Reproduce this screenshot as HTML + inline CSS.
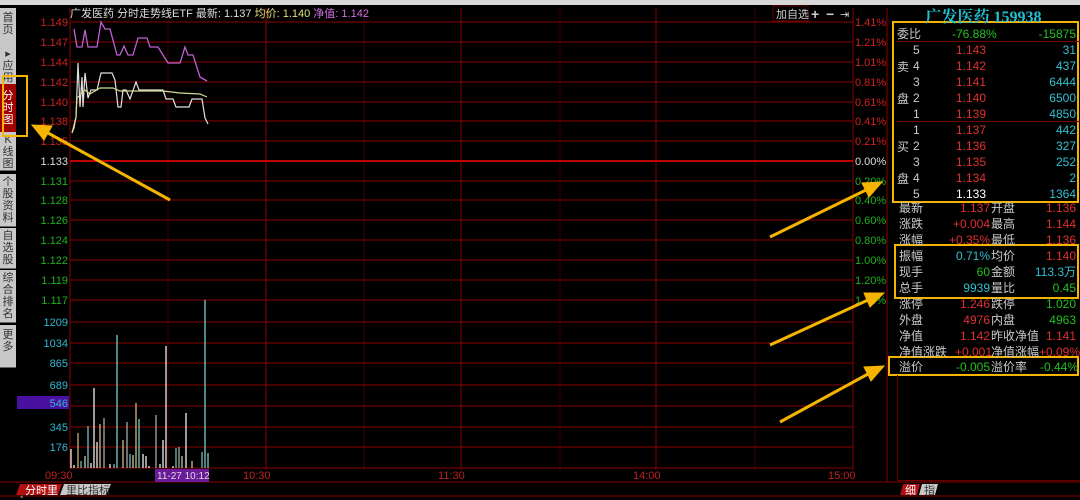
<!DOCTYPE html>
<html><head><meta charset="utf-8"><style>
body{margin:0;width:1080px;height:500px;background:#000;overflow:hidden;position:relative;font-family:"Liberation Sans","Noto Sans CJK SC",sans-serif;}
.tab{position:absolute;left:0;width:16px;background:#c8c8c8;color:#333;font-size:11px;line-height:12px;text-align:center;border-bottom:1px solid #666;}
#rp{position:absolute;left:887px;top:0;width:193px;height:500px;}
.r{position:absolute;left:10px;width:183px;height:16px;font-size:12px;line-height:16px;}
.r span{position:absolute;}
</style></head><body>
<div style="position:absolute;left:0;top:0;width:1080px;height:5px;background:#d8d8d8"></div>
<div class="tab" style="top:8px;height:34px;padding-top:4px">首<br>页</div>
<div class="tab" style="top:46px;height:36px;padding-top:2px">▸<br>应<br>用</div>
<div class="tab" style="top:84px;height:44px;padding-top:6px;background:#a00000;color:#fff">分<br>时<br>图</div>
<div class="tab" style="top:132px;height:36px;padding-top:2px">K<br>线<br>图</div>
<div class="tab" style="top:174px;height:50px;padding-top:2px">个<br>股<br>资<br>料</div>
<div class="tab" style="top:228px;height:38px;padding-top:2px">自<br>选<br>股</div>
<div class="tab" style="top:270px;height:50px;padding-top:2px">综<br>合<br>排<br>名</div>
<div class="tab" style="top:325px;height:38px;padding-top:4px">更<br>多</div>
<svg width="1080" height="500" style="position:absolute;left:0;top:0" font-family="Liberation Sans,Noto Sans CJK SC,sans-serif">
<g stroke="#8a0000" stroke-width="1">
<line x1="70" y1="8" x2="70" y2="470"/>
<line x1="168" y1="8" x2="168" y2="470" stroke="#400"/><line x1="266" y1="8" x2="266" y2="470"/><line x1="364" y1="8" x2="364" y2="470" stroke="#400"/><line x1="461" y1="8" x2="461" y2="470"/><line x1="560" y1="8" x2="560" y2="470" stroke="#400"/><line x1="656" y1="8" x2="656" y2="470"/><line x1="755" y1="8" x2="755" y2="470" stroke="#400"/><line x1="853" y1="8" x2="853" y2="470"/>
<line x1="70" y1="22" x2="853" y2="22"/><line x1="70" y1="42" x2="853" y2="42"/><line x1="70" y1="62" x2="853" y2="62"/><line x1="70" y1="82" x2="853" y2="82"/><line x1="70" y1="102" x2="853" y2="102"/><line x1="70" y1="121" x2="853" y2="121"/><line x1="70" y1="141" x2="853" y2="141"/>
<line x1="70" y1="161" x2="853" y2="161" stroke="#c00000" stroke-width="2"/>
<line x1="70" y1="181" x2="853" y2="181"/><line x1="70" y1="200" x2="853" y2="200"/><line x1="70" y1="220" x2="853" y2="220"/><line x1="70" y1="240" x2="853" y2="240"/><line x1="70" y1="260" x2="853" y2="260"/><line x1="70" y1="280" x2="853" y2="280"/><line x1="70" y1="300" x2="853" y2="300"/>
<line x1="70" y1="322" x2="853" y2="322"/><line x1="70" y1="343" x2="853" y2="343"/><line x1="70" y1="363" x2="853" y2="363"/><line x1="70" y1="385" x2="853" y2="385"/><line x1="70" y1="406" x2="853" y2="406"/><line x1="70" y1="427" x2="853" y2="427"/><line x1="70" y1="447" x2="853" y2="447"/><line x1="70" y1="468" x2="853" y2="468"/>
<line x1="0" y1="482" x2="1080" y2="482"/><line x1="0" y1="496" x2="1080" y2="496"/>
<line x1="887" y1="8" x2="887" y2="482"/>
</g>
<text x="70" y="17" font-size="11" fill="#ddd">广发医药 分时走势线ETF 最新: 1.137 <tspan fill="#e0e080">均价: 1.140</tspan> <tspan fill="#d070e0">净值: 1.142</tspan></text>
<g fill="#ccc" font-size="11"><rect x="773" y="6" width="35" height="15" fill="none" stroke="#600"/><text x="776" y="18">加自选</text><text x="811" y="19" font-size="14" font-weight="bold">+</text><text x="826" y="19" font-size="14" font-weight="bold">−</text><text x="840" y="18">⇥</text></g>
<g font-size="11" text-anchor="end">
<g fill="#d02020"><text x="68" y="26">1.149</text><text x="68" y="46">1.147</text><text x="68" y="66">1.144</text><text x="68" y="86">1.142</text><text x="68" y="106">1.140</text><text x="68" y="125">1.138</text><text x="68" y="145">1.135</text></g>
<text x="68" y="165" fill="#ddd">1.133</text>
<g fill="#20b020"><text x="68" y="185">1.131</text><text x="68" y="204">1.128</text><text x="68" y="224">1.126</text><text x="68" y="244">1.124</text><text x="68" y="264">1.122</text><text x="68" y="284">1.119</text><text x="68" y="304">1.117</text></g>
<rect x="17" y="396" width="52" height="13" fill="#4a10a0"/>
<g fill="#30b8d0"><text x="68" y="326">1209</text><text x="68" y="347">1034</text><text x="68" y="367">865</text><text x="68" y="389">689</text><text x="68" y="407">546</text><text x="68" y="431">345</text><text x="68" y="451">176</text></g>
</g>
<g font-size="11">
<g fill="#d02020"><text x="855" y="26">1.41%</text><text x="855" y="46">1.21%</text><text x="855" y="66">1.01%</text><text x="855" y="86">0.81%</text><text x="855" y="106">0.61%</text><text x="855" y="125">0.41%</text><text x="855" y="145">0.21%</text></g>
<text x="855" y="165" fill="#ddd">0.00%</text>
<g fill="#20b020"><text x="855" y="185">0.20%</text><text x="855" y="204">0.40%</text><text x="855" y="224">0.60%</text><text x="855" y="244">0.80%</text><text x="855" y="264">1.00%</text><text x="855" y="284">1.20%</text><text x="855" y="304">1.40%</text></g>
<g fill="#c02020"><text x="45" y="479">09:30</text><text x="243" y="479">10:30</text><text x="438" y="479">11:30</text><text x="633" y="479">14:00</text><text x="828" y="479">15:00</text></g>
<rect x="155" y="469" width="54" height="13" fill="#6a1a9a"/><text x="157" y="479" fill="#ddd" font-size="10">11-27 10:12</text>
</g>
<path d="M20 484 H62 L58 495 H16 Z" fill="#b01010"/><text x="25" y="494" font-size="11" fill="#fff">分时里</text>
<path d="M64 484 H111 L106 495 H60 Z" fill="#c8c8c8"/><text x="66" y="494" font-size="11" fill="#333">里比指标</text>
<polyline fill="none" stroke="#c060d0" stroke-width="1.3" points="74,29 77,47 82,47 85,30 88,47 97,47 101,22 105,29 110,29 117,55 120,55 124,46 128,55 133,55 138,38 147,38 150,47 158,47 163,55 168,63 180,63 185,47 188,55 193,55 200,77 207,81"/>
<polyline fill="none" stroke="#e0e0e0" stroke-width="1.2" points="72,133 74,128 76,117 78,63 80,107 82,77 83,107 85,73 88,98 91,90 97,90 101,73 107,73 112,73 115,80 118,107 121,107 123,90 126,90 130,99 136,82 139,90 163,90 166,99 173,99 176,107 189,107 192,99 202,99 205,118 208,124"/>
<polyline fill="none" stroke="#d8d890" stroke-width="1.2" points="72,133 76,117 77,98 80,95 85,90 90,94 100,88 113,88 120,91 163,91 180,93 200,94 207,97"/>
<g stroke-width="1.3">
<line x1="71" y1="468" x2="71" y2="449" stroke="#eee"/><line x1="74" y1="468" x2="74" y2="465" stroke="#eee"/><line x1="78" y1="468" x2="78" y2="433" stroke="#c8b070"/><line x1="81" y1="468" x2="81" y2="461" stroke="#6bb"/><line x1="85" y1="468" x2="85" y2="456" stroke="#bca"/><line x1="88" y1="468" x2="88" y2="426" stroke="#7bb"/><line x1="91" y1="468" x2="91" y2="463" stroke="#eee"/><line x1="94" y1="468" x2="94" y2="388" stroke="#eee"/><line x1="97" y1="468" x2="97" y2="442" stroke="#eee"/><line x1="100" y1="468" x2="100" y2="424" stroke="#cb8"/><line x1="104" y1="468" x2="104" y2="418" stroke="#aaa"/><line x1="110" y1="468" x2="110" y2="464" stroke="#eee"/><line x1="114" y1="468" x2="114" y2="464" stroke="#7bb"/><line x1="117" y1="468" x2="117" y2="335" stroke="#7cc"/><line x1="123" y1="468" x2="123" y2="440" stroke="#cb8"/><line x1="127" y1="468" x2="127" y2="422" stroke="#aaa"/><line x1="130" y1="468" x2="130" y2="454" stroke="#7bb"/><line x1="133" y1="468" x2="133" y2="455" stroke="#bca"/><line x1="136" y1="468" x2="136" y2="403" stroke="#cb8"/><line x1="139" y1="468" x2="139" y2="419" stroke="#7cc"/><line x1="143" y1="468" x2="143" y2="454" stroke="#eee"/><line x1="146" y1="468" x2="146" y2="456" stroke="#eee"/><line x1="149" y1="468" x2="149" y2="466" stroke="#eee"/><line x1="156" y1="468" x2="156" y2="415" stroke="#aaa"/><line x1="160" y1="468" x2="160" y2="464" stroke="#eee"/><line x1="163" y1="468" x2="163" y2="440" stroke="#eee"/><line x1="166" y1="468" x2="166" y2="346" stroke="#eee"/><line x1="173" y1="468" x2="173" y2="466" stroke="#eee"/><line x1="176" y1="468" x2="176" y2="448" stroke="#7bb"/><line x1="179" y1="468" x2="179" y2="447" stroke="#aaa"/><line x1="182" y1="468" x2="182" y2="456" stroke="#bca"/><line x1="186" y1="468" x2="186" y2="413" stroke="#eee"/><line x1="192" y1="468" x2="192" y2="461" stroke="#cb8"/><line x1="202" y1="468" x2="202" y2="452" stroke="#7bb"/><line x1="205" y1="468" x2="205" y2="300" stroke="#7cc"/><line x1="208" y1="468" x2="208" y2="453" stroke="#7cc"/>
</g>
<g font-size="10" fill="#666"><text x="20" y="500">▪</text></g>
<!-- orange boxes -->
<g fill="none" stroke="#f5b400" stroke-width="2">
<rect x="3" y="76" width="24" height="60"/>
<rect x="893" y="22" width="185" height="180"/>
<rect x="895" y="245" width="183" height="53"/>
<rect x="889" y="357" width="189" height="18"/>
</g>
<g fill="#f5b400" stroke="#f5b400">
<line x1="170" y1="200" x2="48" y2="133" stroke-width="3"/><polygon points="32,125 52,126 44,140"/>
<line x1="770" y1="237" x2="866" y2="190" stroke-width="3"/><polygon points="882,182 862,183 869,197"/>
<line x1="770" y1="345" x2="868" y2="300" stroke-width="3"/><polygon points="884,293 864,293 870,307"/>
<line x1="780" y1="422" x2="868" y2="374" stroke-width="3"/><polygon points="884,366 864,367 871,381"/>
</g>
<path d="M903 484 H920 L917 495 H900 Z" fill="#b01010"/><text x="905" y="494" font-size="11" fill="#fff">细</text>
<path d="M922 484 H938 L935 495 H919 Z" fill="#c8c8c8"/><text x="924" y="494" font-size="11" fill="#333">指</text>
</svg>
<div id="rp">
<div style="position:absolute;left:0;top:4px;width:193px;text-align:center;color:#20c0d0;font-size:16px;font-weight:bold;font-family:'Liberation Serif','Noto Serif CJK SC',serif">广发医药 159938</div>
<div class="r" style="top:26px;color:#ccc"><span style="left:0">委比</span><span style="left:55px;color:#20c020">-76.88%</span><span style="right:4px;color:#20c020">-15875</span></div>
<div style="position:absolute;left:10px;top:59px;color:#ccc;font-size:12px;line-height:16px">卖<br><br>盘</div>
<div style="position:absolute;left:10px;top:139px;color:#ccc;font-size:12px;line-height:16px">买<br><br>盘</div>
<div class="r" style="top:42px"><span style="left:16px;color:#ccc">5</span><span style="left:59px;color:#e03030">1.143</span><span style="right:4px;color:#30c0d0">31</span></div>
<div class="r" style="top:58px"><span style="left:16px;color:#ccc">4</span><span style="left:59px;color:#e03030">1.142</span><span style="right:4px;color:#30c0d0">437</span></div>
<div class="r" style="top:74px"><span style="left:16px;color:#ccc">3</span><span style="left:59px;color:#e03030">1.141</span><span style="right:4px;color:#30c0d0">6444</span></div>
<div class="r" style="top:90px"><span style="left:16px;color:#ccc">2</span><span style="left:59px;color:#e03030">1.140</span><span style="right:4px;color:#30c0d0">6500</span></div>
<div class="r" style="top:106px"><span style="left:16px;color:#ccc">1</span><span style="left:59px;color:#e03030">1.139</span><span style="right:4px;color:#30c0d0">4850</span></div>
<div class="r" style="top:122px"><span style="left:16px;color:#ccc">1</span><span style="left:59px;color:#e03030">1.137</span><span style="right:4px;color:#30c0d0">442</span></div>
<div class="r" style="top:138px"><span style="left:16px;color:#ccc">2</span><span style="left:59px;color:#e03030">1.136</span><span style="right:4px;color:#30c0d0">327</span></div>
<div class="r" style="top:154px"><span style="left:16px;color:#ccc">3</span><span style="left:59px;color:#e03030">1.135</span><span style="right:4px;color:#30c0d0">252</span></div>
<div class="r" style="top:170px"><span style="left:16px;color:#ccc">4</span><span style="left:59px;color:#e03030">1.134</span><span style="right:4px;color:#30c0d0">2</span></div>
<div class="r" style="top:186px"><span style="left:16px;color:#ccc">5</span><span style="left:59px;color:#fff">1.133</span><span style="right:4px;color:#30c0d0">1364</span></div>
<div style="position:absolute;left:10px;top:41px;width:183px;border-top:1px solid #700"></div>
<div style="position:absolute;left:10px;top:121px;width:183px;border-top:1px solid #700"></div>
<div class="r" style="top:200px;color:#ccc"><span style="left:2px">最新</span><span style="right:90px;color:#e03030">1.137</span><span style="left:94px">开盘</span><span style="right:4px;color:#e03030">1.136</span></div>
<div class="r" style="top:216px;color:#ccc"><span style="left:2px">涨跌</span><span style="right:90px;color:#e03030">+0.004</span><span style="left:94px">最高</span><span style="right:4px;color:#e03030">1.144</span></div>
<div class="r" style="top:232px;color:#ccc"><span style="left:2px">涨幅</span><span style="right:90px;color:#e03030">+0.35%</span><span style="left:94px">最低</span><span style="right:4px;color:#e03030">1.136</span></div>
<div class="r" style="top:248px;color:#ccc"><span style="left:2px">振幅</span><span style="right:90px;color:#30c0d0">0.71%</span><span style="left:94px">均价</span><span style="right:4px;color:#e03030">1.140</span></div>
<div class="r" style="top:264px;color:#ccc"><span style="left:2px">现手</span><span style="right:90px;color:#20c020">60</span><span style="left:94px">金额</span><span style="right:4px;color:#30c0d0">113.3万</span></div>
<div class="r" style="top:280px;color:#ccc"><span style="left:2px">总手</span><span style="right:90px;color:#30c0d0">9939</span><span style="left:94px">量比</span><span style="right:4px;color:#20c020">0.45</span></div>
<div class="r" style="top:296px;color:#ccc"><span style="left:2px">涨停</span><span style="right:90px;color:#e03030">1.246</span><span style="left:94px">跌停</span><span style="right:4px;color:#20c020">1.020</span></div>
<div class="r" style="top:312px;color:#ccc"><span style="left:2px">外盘</span><span style="right:90px;color:#e03030">4976</span><span style="left:94px">内盘</span><span style="right:4px;color:#20c020">4963</span></div>
<div class="r" style="top:328px;color:#ccc"><span style="left:2px">净值</span><span style="right:90px;color:#e03030">1.142</span><span style="left:94px">昨收净值</span><span style="right:4px;color:#e03030">1.141</span></div>
<div class="r" style="top:344px;color:#ccc"><span style="left:2px">净值涨跌</span><span style="right:88px;color:#e03030">+0.001</span><span style="left:94px">净值涨幅</span><span style="right:0;color:#e03030">+0.09%</span></div>
<div class="r" style="top:359px;color:#ccc"><span style="left:2px">溢价</span><span style="right:90px;color:#20c020">-0.005</span><span style="left:94px">溢价率</span><span style="right:2px;color:#20c020">-0.44%</span></div>
<div style="position:absolute;left:10px;top:375px;width:182px;height:105px;border:1px solid #600;border-top:none"></div>
</div>
</body></html>
